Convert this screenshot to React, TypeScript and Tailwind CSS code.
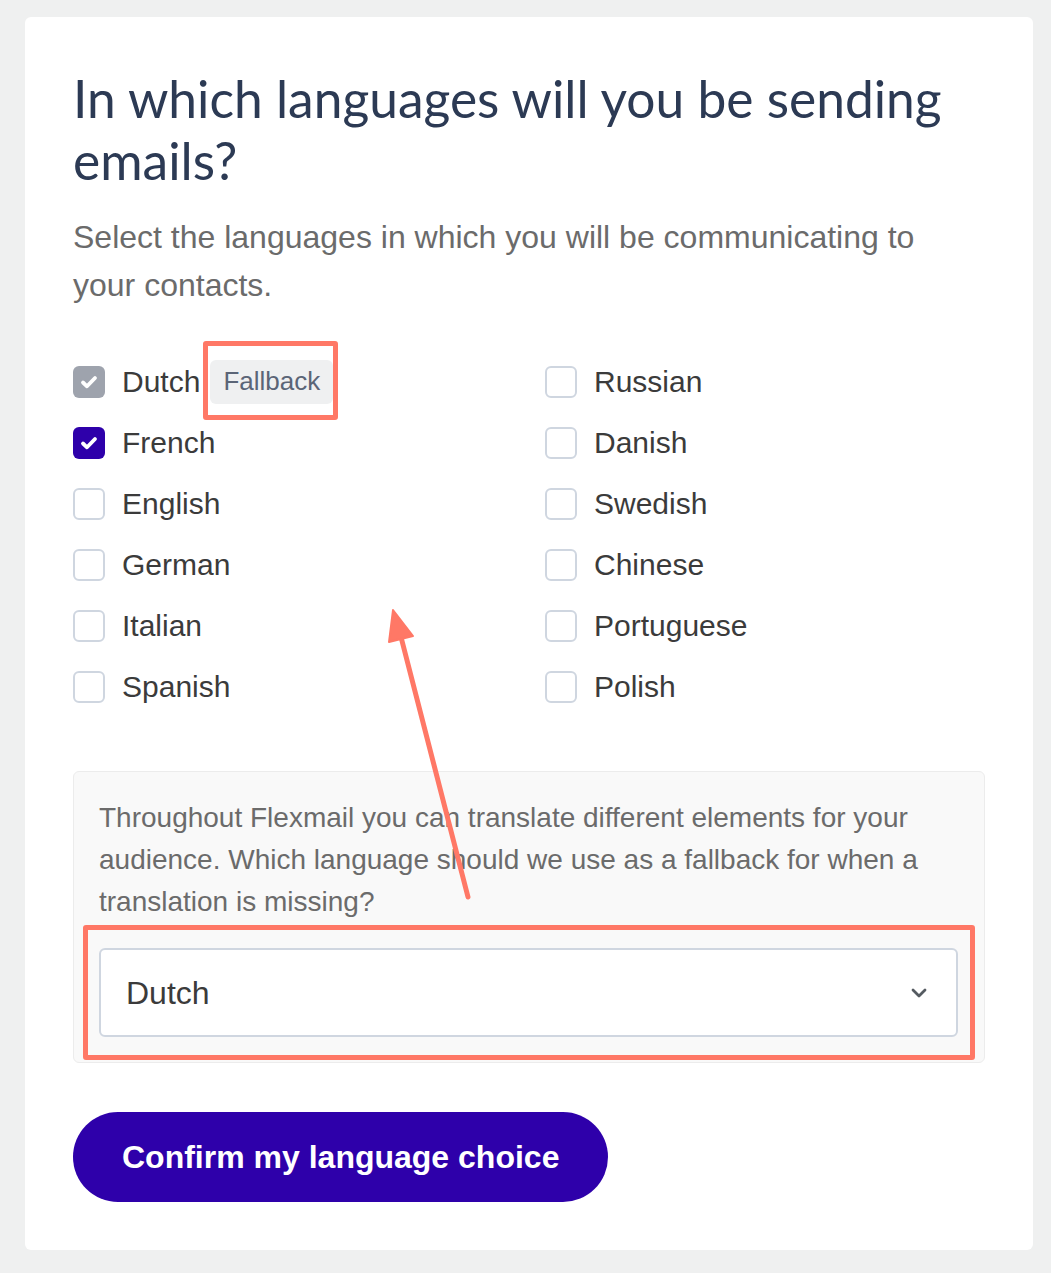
import React, { useState } from "react";

const languagesLeft = ["Dutch", "French", "English", "German", "Italian", "Spanish"];
const languagesRight = ["Russian", "Danish", "Swedish", "Chinese", "Portuguese", "Polish"];

function Check({ state }: { state: "off" | "on" | "locked" }) {
  if (state === "off") {
    return <span className="w-8 h-8 shrink-0 rounded-[6px] border-2 border-[#cfd6e0] bg-white" />;
  }
  return (
    <span
      className={`w-8 h-8 shrink-0 rounded-[6px] flex items-center justify-center ${
        state === "on" ? "bg-[#2e00aa]" : "bg-[#9ea3ad]"
      }`}
    >
      <svg width="20" height="20" viewBox="0 0 20 20">
        <path d="M4 10.5l4 3.8 8-8.3" fill="none" stroke="white" strokeWidth="3.8" strokeLinecap="round" strokeLinejoin="round" />
      </svg>
    </span>
  );
}

function App() {
  const [checked] = useState<string[]>(["Dutch", "French"]);
  const fallback = "Dutch";

  const row = (lang: string) => (
    <div key={lang} className="h-[61px] flex items-center">
      <Check state={lang === fallback ? "locked" : checked.includes(lang) ? "on" : "off"} />
      <span className="ml-[17px] text-[30px] text-[#3b3b3b]">{lang}</span>
      {lang === fallback && (
        <span className="ml-[10px] h-[44px] px-[13px] flex items-center rounded-[6px] bg-[#eff0f1] text-[26px] text-[#5b6577]">
          Fallback
        </span>
      )}
    </div>
  );

  return (
    <div className="min-h-screen bg-[#eff0f0] pl-[25px] pr-[18px] pt-[17px] pb-[24px] font-['Liberation_Sans',Arial,sans-serif]">
      <div className="relative bg-white rounded-[6px] px-[48px] pt-[50px] pb-[48px]">
        <h1 className="font-['Lato',sans-serif] text-[51.5px] leading-[62px] text-[#2c3a54] font-normal">
          In which languages will you be sending emails?
        </h1>
        <p className="mt-[22px] text-[32px] leading-[48px] text-[#6b6b6b]">
          Select the languages in which you will be communicating to your contacts.
        </p>

        <div className="mt-[42px] grid grid-cols-2 gap-x-[32px]">
          <div>{languagesLeft.map(row)}</div>
          <div>{languagesRight.map(row)}</div>
        </div>

        <div className="mt-[54px] bg-[#f9f9f9] border border-[#ececec] rounded-[6px] p-[25px]">
          <p className="text-[28px] leading-[42px] text-[#6b6b6b]">
            Throughout Flexmail you can translate different elements for your audience. Which language should we use as a
            fallback for when a translation is missing?
          </p>
          <div className="mt-[25px] mr-[1px] h-[89px] bg-white border-2 border-[#cfd6e0] rounded-[6px] flex items-center justify-between pl-[25px] pr-[28px]">
            <span className="text-[32px] text-[#3b3b3b]">Dutch</span>
            <svg width="18" height="12" viewBox="0 0 18 12">
              <path d="M3 3l6 6 6-6" fill="none" stroke="#555b61" strokeWidth="2.8" strokeLinecap="round" strokeLinejoin="round" />
            </svg>
          </div>
        </div>

        <button className="mt-[49px] h-[90px] px-[49px] rounded-full bg-[#2e00aa] text-white text-[32px] font-bold">
          Confirm my language choice
        </button>

        {/* annotation overlays */}
        <div className="absolute left-[178px] top-[324px] w-[135px] h-[79px] border-[5px] border-[#ff7866] rounded-[3px] pointer-events-none" />
        <div className="absolute left-[58px] top-[908px] w-[892px] h-[135px] border-[5px] border-[#ff7866] rounded-[3px] pointer-events-none" />
        <svg className="absolute left-0 top-0 pointer-events-none" width="1008" height="1232">
          <line x1="443" y1="880" x2="376" y2="620" stroke="#ff7866" strokeWidth="5" strokeLinecap="round" />
          <polygon points="368,593 388,619 364,625" fill="#ff7866" stroke="#ff7866" strokeWidth="2" strokeLinejoin="round" />
        </svg>
      </div>
    </div>
  );
}

export default App;
